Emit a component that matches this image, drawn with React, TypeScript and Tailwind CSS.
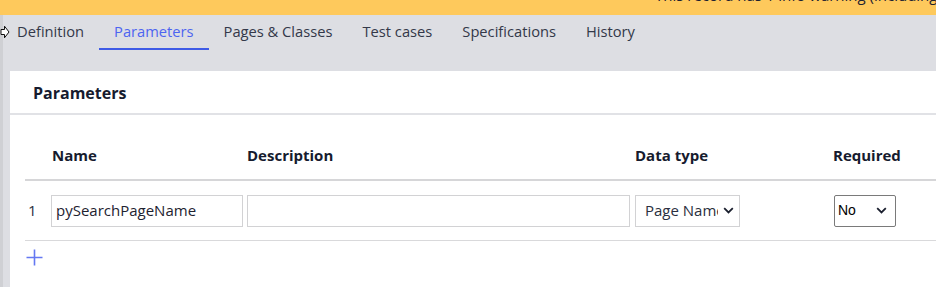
import React from "react";

const tabs = ["Definition", "Parameters", "Pages & Classes", "Test cases", "Specifications", "History"];

function Chevron({ className }: { className?: string }) {
  return (
    <svg width="11" height="7" viewBox="0 0 11 7" className={className}>
      <path d="M1.2 1.2 L5.5 5.4 L9.8 1.2" fill="none" stroke="#1a1f2e" strokeWidth="1.8" />
    </svg>
  );
}

export default function App() {
  return (
    <div className="w-[936px] h-[287px] overflow-hidden bg-[#dddee3] flex flex-col" style={{ fontFamily: '"Open Sans", "Noto Sans", sans-serif' }}>
      <div className="h-[15px] shrink-0 bg-[#fec95c] overflow-hidden relative">
        <div className="absolute left-[655px] top-[-15px] text-[15px] leading-[20px] text-[#1e2230] whitespace-nowrap">
          This record has 1 info warning (including
        </div>
      </div>
      <div className="flex flex-1 min-h-0">
        <div className="w-[3px] bg-[#cfd0d4] shrink-0" />
        <div className="flex-1 flex flex-col min-w-0 relative">
          <svg width="10" height="14" viewBox="0 0 10 14" className="absolute left-[-3px] top-[10px]">
            <path d="M1 4.5 H4.5 V1.2 L9 7 L4.5 12.8 V9.5 H1 Z" fill="#fff" stroke="#111" strokeWidth="1" />
          </svg>
          <div className="flex h-[35px] shrink-0 -ml-[1px]">
            {tabs.map((t) => {
              const active = t === "Parameters";
              return (
                <div
                  key={t}
                  className={
                    "px-[15px] h-[35px] flex items-center text-[14.7px] leading-none border-b-2 " +
                    (active ? "text-[#4d65f0] border-[#3f5be6]" : "text-[#333849] border-transparent")
                  }
                >
                  <span>{t}</span>
                </div>
              );
            })}
          </div>
          <div className="h-[21px] shrink-0" />
          <div className="ml-[7px] flex-1 bg-white flex flex-col">
            <div className="h-[42px] flex items-center pt-[2px] pl-[23px] text-[16px] font-bold text-[#161b2e] shrink-0">
              Parameters
            </div>
            <div className="h-[2px] bg-[#e1e2e6] shrink-0" />
            <div className="pl-[15px]">
              <div className="h-[66px] flex items-end pb-[13px] text-[15px] font-bold text-[#161b2e] border-b-2 border-[#d6d6d8]">
                <div className="w-[26px]" />
                <div className="w-[196px] pl-[1px]">Name</div>
                <div className="w-[388px]">Description</div>
                <div className="w-[198px]">Data type</div>
                <div>Required</div>
              </div>
              <div className="h-[60px] flex items-center border-b border-[#d9d9db] text-[15px] text-[#1e2230]">
                <div className="w-[26px] pl-[3px] text-[#2a2f40]">1</div>
                <div className="w-[196px]">
                  <div className="w-[192px] h-[32px] border border-[#d2d2d4] flex items-center pl-[4px]">pySearchPageName</div>
                </div>
                <div className="w-[388px]">
                  <div className="w-[383px] h-[32px] border border-[#d2d2d4]" />
                </div>
                <div className="w-[199px]">
                  <div className="w-[105px] h-[32px] border border-[#d2d2d4] flex items-center pl-[9px] pr-[5px]">
                    <span className="overflow-hidden whitespace-nowrap w-[73px] text-[#2a2f40]">Page Name</span>
                    <Chevron className="ml-auto" />
                  </div>
                </div>
                <div className="w-[62px] h-[32px] border border-[#7a7a7a] rounded-[2px] flex items-center pl-[3px] pr-[8px] text-[14px] text-black" style={{ fontFamily: '"Liberation Sans", Arial, sans-serif' }}>
                  <span>No</span>
                  <Chevron className="ml-auto" />
                </div>
              </div>
              <div className="pt-[8px] pl-[1px]">
                <svg width="17" height="17" viewBox="0 0 17 17">
                  <path d="M8.5 0.5 V16.5 M0.5 8.5 H16.5" stroke="#6478f2" strokeWidth="1.6" fill="none" />
                </svg>
              </div>
            </div>
          </div>
        </div>
      </div>
    </div>
  );
}
